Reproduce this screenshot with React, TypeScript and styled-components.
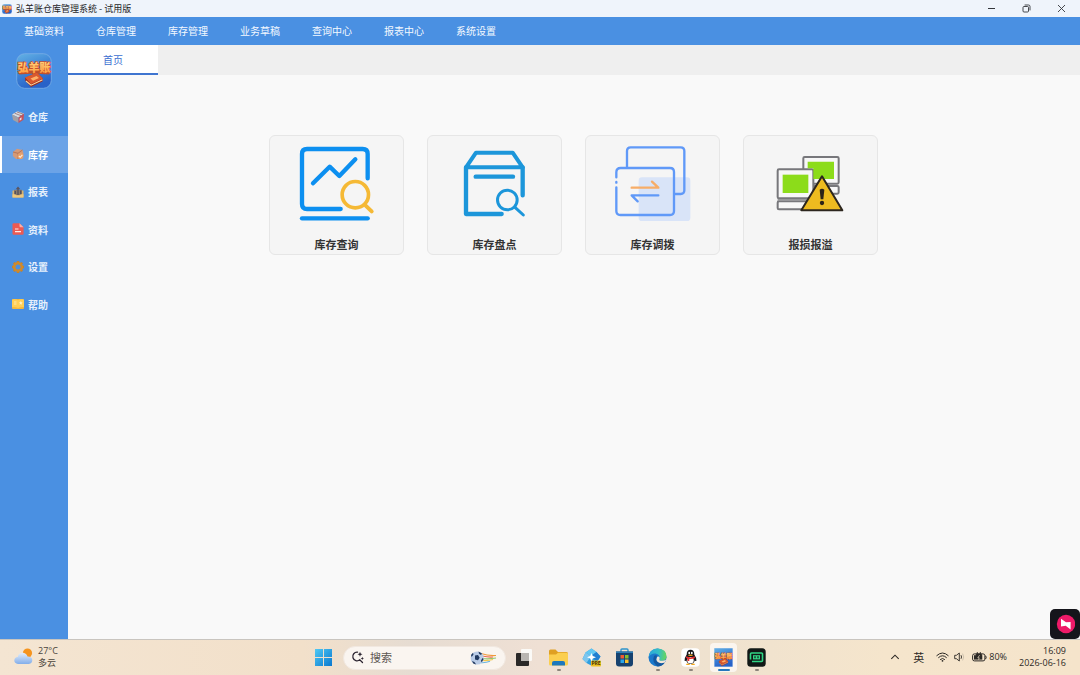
import React from 'react';
import styled, { createGlobalStyle } from 'styled-components';

const GlobalStyle = createGlobalStyle`
  * { box-sizing: border-box; }
  html, body { margin: 0; padding: 0; }
  body, button, input {
    font-family: 'Open Sans', 'Noto Sans CJK SC', sans-serif;
  }
  button { border: 0; padding: 0; margin: 0; background: none; color: inherit; cursor: pointer; }
  svg { display: block; flex: none; }
`;

const Screen = styled.div`
  display: flex;
  flex-direction: column;
  min-height: 100vh;
  background: #f9f9f9;
`;

/* Window title bar */
const TitleBar = styled.header`
  display: flex;
  align-items: center;
  height: 17px;
  padding: 0 2px;
  background: #eff4fb;
`;
const Title = styled.h1`
  flex: 1;
  margin: 0 0 0 4px;
  font-size: 9px;
  line-height: 16px;
  font-weight: 400;
  font-family: 'Noto Sans CJK SC', sans-serif;
  color: #1d1d1f;
`;
const WindowButtons = styled.div`
  display: flex;
  gap: 1px;
`;
const WindowButton = styled.button`
  display: grid;
  place-items: center;
  width: 34px;
  height: 16px;
`;

/* Main menu */
const MenuBar = styled.nav`
  display: flex;
  height: 28px;
  padding: 0 8px;
  background: #4a90e2;
`;
const MenuItem = styled.button`
  padding: 0 16px;
  font-size: 10px;
  line-height: 28px;
  color: #f4f9ff;
`;

/* Body */
const Body = styled.div`
  display: flex;
  flex: 1;
`;
const Sidebar = styled.aside`
  width: 68px;
  flex: none;
  background: #4a90e2;
`;
const LogoBox = styled.div`
  display: flex;
  justify-content: center;
  height: 53px;
  padding-top: 8px;
`;
const SideNav = styled.nav`
  display: flex;
  flex-direction: column;
  height: 225px;
`;
const SideItem = styled.button<{ $active?: boolean }>`
  display: flex;
  flex: 1;
  align-items: center;
  gap: 4px;
  padding-left: 10px;
  border-left: 2px solid ${(p) => (p.$active ? '#ffffff' : 'transparent')};
  background: ${(p) => (p.$active ? '#6ba3e7' : 'transparent')};
  color: ${(p) => (p.$active ? '#ffffff' : '#e6f0fc')};
  font-size: 10px;
  font-weight: 700;
`;
const Workspace = styled.main`
  display: flex;
  flex: 1;
  flex-direction: column;
  min-width: 0;
`;
const TabStrip = styled.div`
  display: flex;
  height: 30px;
  background: #efefef;
`;
const Tab = styled.button`
  width: 90px;
  border-bottom: 2px solid #3f75d0;
  background: #ffffff;
  color: #3c6fd1;
  font-size: 10px;
`;
const CardArea = styled.section`
  display: flex;
  justify-content: center;
  padding: 60px 2px 0 0;
`;
const CardGrid = styled.div`
  display: grid;
  grid-template-columns: repeat(4, 1fr);
  gap: 23px;
  width: 608px;
`;
const Card = styled.button`
  display: flex;
  flex-direction: column;
  align-items: center;
  height: 120px;
  gap: 2px;
  border: 1px solid #e6e6e6;
  border-radius: 6px;
  background: #f5f5f5;
`;
const CardLabel = styled.span`
  font-size: 11px;
  line-height: 16px;
  font-weight: 700;
  color: #333333;
`;

/* Floating recorder button */
const FloatingButton = styled.button`
  position: fixed;
  right: 0;
  bottom: 36px;
  display: grid;
  place-items: center;
  width: 30px;
  height: 30px;
  border-radius: 5px;
  background: #15151b;
`;

/* Taskbar */
const Taskbar = styled.footer`
  display: grid;
  grid-template-columns: 1fr auto 1fr;
  align-items: center;
  height: 36px;
  border-top: 1px solid #c9c5bf;
  background: linear-gradient(90deg, #f4e5d2 0%, #f2e0ca 28%, #e6dcd2 38%, #efe0d4 50%, #efe2cf 66%, #f5e5cc 82%, #f5e4cb 100%);
  color: #2c2925;
`;
const Weather = styled.button`
  display: flex;
  align-items: center;
  justify-self: start;
  gap: 4px;
  padding: 0 0 2px 14px;
  text-align: left;
  font-size: 9px;
  line-height: 12px;
  color: #4b443c;
`;
const Stack = styled.span`
  display: flex;
  flex-direction: column;
`;
const TaskCenter = styled.div`
  display: flex;
  align-items: center;
`;
const TaskApps = styled.div`
  display: flex;
  align-items: center;
  margin-left: 2px;
`;
const SearchBox = styled.label`
  display: flex;
  align-items: center;
  width: 163px;
  height: 24px;
  margin: 0 1px 0 3px;
  padding: 0 7px;
  gap: 6px;
  border: 1px solid #f1e8e0;
  border-radius: 12px;
  background: #faf5f0;
`;
const SearchInput = styled.input`
  flex: 1;
  min-width: 0;
  padding: 0;
  border: 0;
  outline: 0;
  background: none;
  font-size: 11px;
  color: #5c5753;
  &::placeholder { color: #5c5753; opacity: 1; }
`;
const TaskButton = styled.button<{ $state?: 'open' | 'active' }>`
  display: flex;
  flex-direction: column;
  align-items: center;
  width: 33px;
  height: 35px;
  padding-top: 8px;
  gap: 2px;
  &::after {
    content: '';
    width: ${(p) => (p.$state === 'active' ? '12px' : '4px')};
    height: 2px;
    border-radius: 1px;
    background: ${(p) => (p.$state === 'active' ? '#2478bd' : p.$state ? '#8d847b' : 'transparent')};
  }
`;
const ActiveTaskButton = styled(TaskButton)`
  width: 27px;
  height: 29px;
  margin: 0 3px;
  padding-top: 5px;
  border-radius: 4px;
  background: #fbf5ee;
`;
const Tray = styled.div`
  display: flex;
  align-items: center;
  justify-self: end;
  padding: 0 14px 2px 0;
  font-size: 9px;
  line-height: 12px;
`;
const TrayButton = styled.button<{ $gap: number }>`
  display: flex;
  align-items: center;
  gap: 2px;
  margin-right: ${(p) => p.$gap}px;
  font-size: 9px;
`;
const InputMode = styled(TrayButton)`
  font-size: 11px;
`;
const Clock = styled.button`
  font-size: 9px;
  line-height: 12px;
  text-align: right;
`;

function AppLogo({ size, radius = 8 }: { size: number; radius?: number }) {
  const id = `logo${size}`;
  return (
    <svg width={size} height={size} viewBox="0 0 36 36" aria-hidden="true">
      <defs>
        <linearGradient id={`${id}bg`} x1="0" y1="0" x2="0.4" y2="1">
          <stop offset="0" stopColor="#64b2e4" />
          <stop offset="0.5" stopColor="#3f87d8" />
          <stop offset="1" stopColor="#2862c8" />
        </linearGradient>
        <linearGradient id={`${id}tx`} x1="0" y1="0" x2="0" y2="1">
          <stop offset="0" stopColor="#ffe08a" />
          <stop offset="1" stopColor="#ff9a3c" />
        </linearGradient>
      </defs>
      <rect x="0.7" y="0.7" width="34.6" height="34.6" rx={radius} fill={`url(#${id}bg)`} stroke="#7aaee6" strokeWidth="0.8" />
      <path d="M3 20 L9 17 L28 17 L33.5 20 L33 21.5 L18 20.5 L3 21.5 Z" fill="#b9532f" />
      <text x="18" y="18.7" textAnchor="middle" fontSize="11" fontWeight="900" fontFamily="'Noto Sans CJK SC', sans-serif"
        fill={`url(#${id}tx)`} stroke="#c9502a" strokeWidth="1.4" paintOrder="stroke">弘羊账</text>
      <path d="M9 25 L21 19.5 L27 25.5 L26.5 28.5 L15 34 L9.5 28 Z" fill="#9d2b1c" />
      <path d="M9 24.5 L21 19.5 L27 25.5 L15 31 Z" fill="#d9592f" />
      <path d="M10 28 L15 32.2 L26.5 26.8" fill="none" stroke="#ffd79b" strokeWidth="1.1" />
      <path d="M14.5 25.6 L20.5 22.9 L23 25 L17 27.7 Z" fill="#ffb067" />
    </svg>
  );
}

const sideIcons: Record<string, React.ReactNode> = {
  warehouse: (
    <>
      <path d="M0 3.6 L5.5 0.3 L12 2.6 L6.5 6.4 Z" fill="#d9dcdf" />
      <path d="M0 3.6 L6.5 6.4 L6.5 12 L1 9 Z" fill="#a3a0a5" />
      <path d="M6.5 6.4 L12 2.6 L11.5 8.8 L6.5 12 Z" fill="#c75258" />
      <path d="M2.6 2.2 L9 4.7 M5 1 L11 3" stroke="#8b5e62" strokeWidth="0.7" />
      <path d="M7.7 7.5 L9.5 6.3 V8.5 L7.7 9.7 Z" fill="#f2dfdf" />
    </>
  ),
  stock: (
    <>
      <path d="M1 4 L5 0.8 L10.5 2 L11.5 6 L10 11 L4 11 L0.8 8 Z" fill="#d49a79" />
      <path d="M1 4 L6 5.3 L10.5 2 M6 5.3 V11" stroke="#b57252" strokeWidth="0.9" fill="none" />
      <circle cx="8.5" cy="8" r="3" fill="#e8a06a" />
      <path d="M6.9 8 L8.2 9.3 L10.4 6.9" stroke="#fff0dc" strokeWidth="1.1" fill="none" />
    </>
  ),
  report: (
    <>
      <path d="M0.5 4.5 H11.5 V11.5 H0.5 Z" fill="#d9b36c" />
      <path d="M2 3.8 H10 V9 H2 Z" fill="#8b7a68" />
      <path d="M3.3 5 V9 M6 2 V9 M8.7 4.5 V9" stroke="#51505d" strokeWidth="1.3" />
      <path d="M3.7 3.2 L6 0.5 L8.3 3.2 Z" fill="#5c5560" />
      <path d="M0.5 8.3 H3.5 L4.5 9.7 H7.5 L8.5 8.3 H11.5 V11.5 H0.5 Z" fill="#efc77b" />
    </>
  ),
  data: (
    <>
      <path d="M1.7 0.3 H7.5 L11.6 4.3 V10.5 Q11.6 11.7 10.4 11.7 H1.7 Q0.5 11.7 0.5 10.5 V1.5 Q0.5 0.3 1.7 0.3 Z" fill="#ec5a53" />
      <path d="M7.5 0.3 L11.6 4.3 H8.5 Q7.5 4.3 7.5 3.3 Z" fill="#f7b0aa" />
      <path d="M3 6 H6.5 M3 8.7 H9" stroke="#ffeae6" strokeWidth="1.2" />
    </>
  ),
  settings: (
    <>
      <path d="M6 0 V12 M0 6 H12 M1.76 1.76 L10.24 10.24 M10.24 1.76 L1.76 10.24" stroke="#c1832f" strokeWidth="2.4" />
      <circle cx="6" cy="6" r="3.8" fill="#4a90e2" stroke="#d08a2b" strokeWidth="2.6" />
    </>
  ),
  help: (
    <>
      <rect x="0" y="1" width="12" height="10" rx="1" fill="#f4b93f" />
      <path d="M0 1.7 Q3.5 0.7 6 2.2 Q8.5 0.7 12 1.7 V9 Q8.5 8.5 6 10 Q3.5 8.5 0 9 Z" fill="#ffcf55" />
      <path d="M2 4 H4.5 M2 6 H4.5" stroke="#fff0b8" strokeWidth="0.9" />
      <path d="M8.8 3 L9.4 4.3 L10.7 4.4 L9.7 5.3 L10 6.7 L8.8 6 L7.6 6.7 L7.9 5.3 L6.9 4.4 L8.2 4.3 Z" fill="#fff3c8" />
    </>
  ),
};

const sideItems = [
  { icon: 'warehouse', label: '仓库' },
  { icon: 'stock', label: '库存', active: true },
  { icon: 'report', label: '报表' },
  { icon: 'data', label: '资料' },
  { icon: 'settings', label: '设置' },
  { icon: 'help', label: '帮助' },
];

const menuItems = ['基础资料', '仓库管理', '库存管理', '业务草稿', '查询中心', '报表中心', '系统设置'];

const cards = [
  {
    label: '库存查询',
    viewBox: '30 34 399 297',
    art: (
      <g fill="none" strokeLinecap="round" strokeLinejoin="round" strokeWidth="13">
        <g stroke="#0c8ff0">
          <path d="M323 161 V88 Q323 73 308 73 H141 Q126 73 126 88 V238 Q126 253 141 253 H242" />
          <path d="M126 281 H323" />
          <path d="M159 176 L209 126 L238 154 L286 104" />
        </g>
        <g stroke="#f5b935">
          <circle cx="286" cy="210" r="39.5" strokeWidth="11" />
          <path d="M317 243 L335 260" strokeWidth="12" />
        </g>
      </g>
    ),
  },
  {
    label: '库存盘点',
    viewBox: '30 34 399 297',
    art: (
      <g fill="none" stroke="#1c96da" strokeLinecap="round" strokeLinejoin="round" strokeWidth="13">
        <path d="M144 128 L174 84 H284 L314 128 Z" strokeWidth="12" />
        <path d="M314 128 V212 M144 128 V268 H251" />
        <path d="M173 156 H285" />
        <circle cx="268" cy="226" r="29.5" strokeWidth="9" />
        <path d="M291 248 L316 271" strokeWidth="9" />
      </g>
    ),
  },
  {
    label: '库存调拨',
    viewBox: '30 34 399 297',
    art: (
      <g fill="none" strokeLinecap="round" strokeLinejoin="round" strokeWidth="7">
        <rect x="188" y="158" width="155" height="131" rx="10" fill="#d9e4f8" />
        <g stroke="#6099f8">
          <path d="M153 126 V79 Q153 68 164 68 H314 Q325 68 325 79 V197 Q325 208 314 208 H298" />
          <path d="M121 158 V143 Q121 130 134 130 H282 Q294 130 294 142 V259 Q294 271 282 271 H133 Q121 271 121 259 V188" />
          <path d="M121 172 V174" />
          <path d="M247 212 H167 L185 230" />
        </g>
        <path d="M167 189 H247 L228 171" stroke="#f7ad68" />
      </g>
    ),
  },
  {
    label: '报损报溢',
    viewBox: '33 34 399 297',
    art: (
      <g strokeLinejoin="round">
        <g fill="#f7f7f7" stroke="#77777b" strokeWidth="6">
          <rect x="211" y="97" width="106" height="80" rx="4" />
          <rect x="232" y="184" width="85" height="23" rx="4" />
          <rect x="134" y="134" width="107" height="87" rx="4" />
          <rect x="134" y="230" width="107" height="24" rx="4" />
        </g>
        <path d="M224 111 H303 V163 H241 V131 H224 Z" fill="#8cdc1a" />
        <rect x="149" y="150" width="77" height="55" fill="#8cdc1a" />
        <path d="M134 226 H222" stroke="#97979a" strokeWidth="6" />
        <path d="M267 155 L328 257 H205 Z" fill="#edbb20" stroke="#2c261e" strokeWidth="6" />
        <path d="M260 195 Q267 189 274 195 L271 224 H263 Z" fill="#2b2318" />
        <circle cx="267" cy="235" r="6.5" fill="#2b2318" />
      </g>
    ),
  },
];

const taskIcons = {
  start: (
    <svg width="19" height="19" viewBox="0 0 19 19">
      <defs>
        <linearGradient id="win" x1="0" y1="0" x2="1" y2="1">
          <stop offset="0" stopColor="#4fc9f4" />
          <stop offset="1" stopColor="#0a78cf" />
        </linearGradient>
      </defs>
      <path d="M1 1 H9 V9 H1 Z M10 1 H18 V9 H10 Z M1 10 H9 V18 H1 Z M10 10 H18 V18 H10 Z" fill="url(#win)" />
    </svg>
  ),
  taskView: (
    <svg width="19" height="19" viewBox="0 0 19 19">
      <rect x="7" y="1" width="11" height="12" rx="1" fill="#fbfaf7" />
      <rect x="2" y="5" width="13" height="13" rx="1" fill="#2a2827" />
      <path d="M7 5 H15 V13 H7 Z" fill="#b9b6b2" />
    </svg>
  ),
  explorer: (
    <svg width="19" height="19" viewBox="0 0 19 19">
      <path d="M0 3 Q0 1.5 1.5 1.5 H6.5 L9 4 H17.5 Q19 4 19 5.5 V8 H0 Z" fill="#dfa022" />
      <path d="M0 6.5 H7 L9 4.8 H17.8 Q19 4.8 19 6 V16 Q19 17.5 17.5 17.5 H1.5 Q0 17.5 0 16 Z" fill="#fbcf4f" />
      <path d="M3 17.5 V15 Q3 13 5 13 H14 Q16 13 16 15 V17.5 Z" fill="#1c78bd" />
    </svg>
  ),
  copilot: (
    <svg width="19" height="19" viewBox="0 0 19 19">
      <path d="M9.5 0.5 L14.5 4 L18.5 8.5 L15 14 L10 18 L4.5 15 L0.5 11 L3.5 4.5 Z" fill="#2f9fe0" />
      <path d="M9.5 0.5 L14.5 4 L9 8 L3.5 4.5 Z" fill="#62c7f2" />
      <path d="M0.5 11 L3.5 4.5 L9 8 L4.5 15 Z" fill="#7cc6ee" />
      <path d="M14.5 4 L18.5 8.5 L15 14 L9 8 Z" fill="#227fd0" />
      <path d="M9.5 5 L10.8 8 L14 9.3 L10.8 10.6 L9.5 13.7 L8.2 10.6 L5 9.3 L8.2 8 Z" fill="#ffffff" />
      <rect x="9" y="12.5" width="10" height="6" rx="1" fill="#efc120" />
      <text x="14" y="17.4" textAnchor="middle" fontSize="5" fontWeight="700" fontFamily="'Open Sans', sans-serif" fill="#41340b">PRE</text>
    </svg>
  ),
  store: (
    <svg width="19" height="19" viewBox="0 0 19 19">
      <path d="M6 4 V2 Q6 1 7 1 H12 Q13 1 13 2 V4" fill="none" stroke="#2e94cc" strokeWidth="1.4" />
      <path d="M1 3.5 H18 V15.5 Q18 18.5 15 18.5 H4 Q1 18.5 1 15.5 Z" fill="#17426f" />
      <path d="M1 3.5 H18 V5 H1 Z" fill="#2d7db5" />
      <path d="M5.5 7 H9 V10.5 H5.5 Z" fill="#ef5a32" />
      <path d="M10 7 H13.5 V10.5 H10 Z" fill="#88bd2b" />
      <path d="M5.5 11.5 H9 V15 H5.5 Z" fill="#2aa6e8" />
      <path d="M10 11.5 H13.5 V15 H10 Z" fill="#fbc12d" />
    </svg>
  ),
  edge: (
    <svg width="19" height="19" viewBox="0 0 19 19">
      <defs>
        <linearGradient id="edgeTop" x1="0" y1="0.4" x2="1" y2="0.5">
          <stop offset="0" stopColor="#2aa6dc" />
          <stop offset="0.55" stopColor="#34bfc4" />
          <stop offset="1" stopColor="#68d65a" />
        </linearGradient>
      </defs>
      <circle cx="9.5" cy="9.5" r="9" fill="#1b78cb" />
      <path d="M0.6 9 Q1.5 0.5 9.7 0.5 Q18.5 1 18.5 8.5 Q18 12.8 13.5 12.8 Q10.5 12.6 11.6 10.7 Q12.4 6.4 7.5 5.5 Q2.8 5.3 0.6 9 Z" fill="url(#edgeTop)" />
      <path d="M11.6 10.7 Q10.5 12.6 13.5 12.8 Q16.2 12.9 18.3 11.5 L16.6 15 Q12.5 17 9.2 14.2 Q7.4 11.6 9.2 8.8 Q12.2 8 11.6 10.7 Z" fill="#f2e7da" />
      <path d="M6 8 Q3.5 14 9.7 18.5 Q14.2 18.3 16.8 14.5 Q12.2 16.3 9.2 13.6 Q7 11 9.2 7.8 Q7.5 6.7 6 8 Z" fill="#15589f" />
    </svg>
  ),
  qq: (
    <svg width="19" height="19" viewBox="0 0 19 19">
      <rect x="0.3" y="0.3" width="18.4" height="18.4" rx="4" fill="#ffffff" />
      <path d="M9.5 1.8 Q13.4 2 13.3 6.5 Q15.7 10 15.4 12.8 Q14.8 13.5 13.8 12.2 Q12.8 16 9.5 16 Q6.2 16 5.2 12.2 Q4.2 13.5 3.6 12.8 Q3.3 10 5.7 6.5 Q5.6 2 9.5 1.8 Z" fill="#16181c" />
      <ellipse cx="9.5" cy="12.2" rx="3.2" ry="3.2" fill="#ffffff" />
      <ellipse cx="8.2" cy="5" rx="0.9" ry="1.2" fill="#ffffff" />
      <ellipse cx="10.8" cy="5" rx="0.9" ry="1.2" fill="#ffffff" />
      <ellipse cx="9.5" cy="7.2" rx="2.4" ry="0.8" fill="#f4a91e" />
      <path d="M5.3 8.3 Q9.5 10.6 13.7 8.3 L14 9.9 Q11.5 11.3 8.3 10.9 V13 H6.5 V10.5 L5 9.9 Z" fill="#e42a2c" />
      <path d="M4.8 16.2 Q6.5 14.5 9.2 16.5 Q6.5 17.8 4.8 16.2 Z M14.2 16.2 Q12.5 14.5 9.8 16.5 Q12.5 17.8 14.2 16.2 Z" fill="#f4a91e" />
    </svg>
  ),
  recorder: (
    <svg width="19" height="19" viewBox="0 0 19 19">
      <rect x="0.3" y="0.3" width="18.4" height="18.4" rx="3.5" fill="#111816" />
      <path d="M3.5 11.5 V6 Q3.5 5 4.5 5 H14.5 Q15.5 5 15.5 6 V12.5 Q15.5 13.5 14.5 13.5 H5" fill="none" stroke="#31d685" strokeWidth="1.6" />
      <rect x="6" y="7.2" width="7" height="4.2" fill="#31d685" />
      <path d="M8 8.3 V10.3 M11 8.3 V10.3" stroke="#111816" strokeWidth="1.2" />
    </svg>
  ),
};

export default function App() {
  return (
    <>
      <GlobalStyle />
      <Screen>
        <TitleBar>
          <AppLogo size={10} />
          <Title>弘羊账仓库管理系统 - 试用版</Title>
          <WindowButtons>
            <WindowButton aria-label="最小化">
              <svg width="9" height="9" viewBox="0 0 9 9"><path d="M1 4.5 H8" stroke="#33363a" /></svg>
            </WindowButton>
            <WindowButton aria-label="还原">
              <svg width="9" height="9" viewBox="0 0 9 9" fill="none" stroke="#33363a" strokeWidth="0.9">
                <rect x="1" y="2.5" width="5.5" height="5.5" rx="1" />
                <path d="M2.6 1 H6.5 Q8 1 8 2.5 V6.4" />
              </svg>
            </WindowButton>
            <WindowButton aria-label="关闭">
              <svg width="9" height="9" viewBox="0 0 9 9"><path d="M1 1 L8 8 M8 1 L1 8" stroke="#33363a" strokeWidth="0.9" /></svg>
            </WindowButton>
          </WindowButtons>
        </TitleBar>

        <MenuBar>
          {menuItems.map((m) => <MenuItem key={m}>{m}</MenuItem>)}
        </MenuBar>

        <Body>
          <Sidebar>
            <LogoBox><AppLogo size={36} /></LogoBox>
            <SideNav>
              {sideItems.map((s) => (
                <SideItem key={s.label} $active={s.active}>
                  <svg width="12" height="12" viewBox="0 0 12 12" fill="none" aria-hidden="true">{sideIcons[s.icon]}</svg>
                  {s.label}
                </SideItem>
              ))}
            </SideNav>
          </Sidebar>
          <Workspace>
            <TabStrip><Tab>首页</Tab></TabStrip>
            <CardArea>
              <CardGrid>
                {cards.map((c) => (
                  <Card key={c.label}>
                    <svg width="133" height="99" viewBox={c.viewBox} aria-hidden="true">{c.art}</svg>
                    <CardLabel>{c.label}</CardLabel>
                  </Card>
                ))}
              </CardGrid>
            </CardArea>
          </Workspace>
        </Body>

        <FloatingButton aria-label="录制">
          <svg width="20" height="20" viewBox="0 0 20 20">
            <circle cx="11" cy="10" r="9.2" fill="#ee1a68" />
            <path d="M6 4.7 L11 8.3 L15.6 8 V15.4 L10.7 11.8 L6 12.6 Z" fill="#ffffff" />
          </svg>
        </FloatingButton>

        <Taskbar>
          <Weather>
            <svg width="20" height="20" viewBox="0 0 20 20">
              <defs>
                <linearGradient id="cloud" x1="0" y1="0" x2="0" y2="1">
                  <stop offset="0" stopColor="#e3edfb" />
                  <stop offset="1" stopColor="#82aeea" />
                </linearGradient>
              </defs>
              <circle cx="13.5" cy="6" r="4.6" fill="#f5941f" />
              <path d="M4 17 Q0.3 16.6 0.3 13.3 Q0.6 10.3 3.7 10 Q5 5.5 9.3 5.8 Q12.5 6.3 13.5 9.5 Q18 9.3 18.3 13 Q18.3 16.6 14.8 17 Z" fill="url(#cloud)" />
            </svg>
            <Stack><span>27°C</span><span>多云</span></Stack>
          </Weather>

          <TaskCenter>
            <TaskButton aria-label="开始">{taskIcons.start}</TaskButton>
            <SearchBox>
              <svg width="13" height="13" viewBox="0 0 13 13" fill="none" stroke="#2b2430" strokeWidth="1.3" strokeLinecap="round">
                <path d="M6.5 1.2 A4.3 4.3 0 1 0 8.8 8.8 L11.5 11.5" />
                <path d="M9 0.8 L9.7 2.6 L11.5 3.3 L9.7 4 L9 5.8 L8.3 4 L6.5 3.3 L8.3 2.6 Z" fill="#2b2430" stroke="none" />
                <path d="M11.3 5.7 L11.8 6.9 L13 7.4 L11.8 7.9 L11.3 9 L10.8 7.9 L9.6 7.4 L10.8 6.9 Z" fill="#2b2430" stroke="none" />
              </svg>
              <SearchInput type="search" placeholder="搜索" aria-label="搜索" />
              <svg width="28" height="16" viewBox="0 0 28 16">
                <g fill="none" strokeWidth="1.2">
                  <path d="M11 3.5 Q18 6 26 5.5" stroke="#f09a3a" />
                  <path d="M12 6 Q19 7.5 23 7" stroke="#ea6a4b" />
                  <path d="M12 8.5 Q19 9.3 26 8" stroke="#8fc46a" />
                  <path d="M12 10.5 Q18 11 23 9.5" stroke="#f2c64b" />
                  <path d="M11 12.7 Q16 13 20 11.3" stroke="#6cb5de" />
                </g>
                <circle cx="7.2" cy="8" r="6.6" fill="#b9cbe6" />
                <path d="M5 5.5 L8 5 L9.7 7.7 L8 10.3 L5 9.6 Z M1 5 L3 2.7 L3.5 4.5 L1.6 7 Z M8.5 1.5 L12 3.5 L11 5 L9 3.7 Z M12.5 8 L13.7 9 L11.5 12.5 L11 10.5 Z M2 11 L4.4 12 L6.2 14.5 L3.3 13.5 Z" fill="#21395f" />
              </svg>
            </SearchBox>
            <TaskButton aria-label="任务视图">{taskIcons.taskView}</TaskButton>
            <TaskApps>
              <TaskButton aria-label="文件资源管理器" $state="open">{taskIcons.explorer}</TaskButton>
              <TaskButton aria-label="Copilot">{taskIcons.copilot}</TaskButton>
              <TaskButton aria-label="应用商店">{taskIcons.store}</TaskButton>
              <TaskButton aria-label="Edge" $state="open">{taskIcons.edge}</TaskButton>
              <TaskButton aria-label="QQ" $state="open">{taskIcons.qq}</TaskButton>
              <ActiveTaskButton aria-label="弘羊账" $state="active"><AppLogo size={19} radius={1} /></ActiveTaskButton>
              <TaskButton aria-label="录屏" $state="open">{taskIcons.recorder}</TaskButton>
            </TaskApps>
          </TaskCenter>

          <Tray>
            <TrayButton $gap={13} aria-label="显示隐藏的图标">
              <svg width="10" height="8" viewBox="0 0 10 8"><path d="M1.3 5.8 L5 2.2 L8.7 5.8" fill="none" stroke="#2c2925" strokeWidth="1.1" /></svg>
            </TrayButton>
            <InputMode $gap={12}>英</InputMode>
            <TrayButton $gap={4} aria-label="网络">
              <svg width="13" height="12" viewBox="0 0 13 12" fill="none" stroke="#2c2925" strokeLinecap="round">
                <path d="M0.8 4.6 Q6.5 -0.8 12.2 4.6 M2.6 6.5 Q6.5 2.8 10.4 6.5 M4.4 8.4 Q6.5 6.4 8.6 8.4" strokeWidth="1" />
                <circle cx="6.5" cy="9.8" r="0.9" fill="#2c2925" stroke="none" />
              </svg>
            </TrayButton>
            <TrayButton $gap={7} aria-label="音量">
              <svg width="12" height="12" viewBox="0 0 12 12" fill="none" stroke="#2c2925" strokeWidth="0.9" strokeLinejoin="round">
                <path d="M1.7 4.3 H3.4 L6.3 2 V10 L3.4 7.7 H1.7 Z" />
                <path d="M8 4.2 Q9.1 6 8 7.8" />
                <path d="M9.6 2.6 Q11.8 6 9.6 9.4" stroke="#c9bda9" />
              </svg>
            </TrayButton>
            <TrayButton $gap={12}>
              <svg width="15" height="12" viewBox="0 0 15 12">
                <rect x="0.6" y="2.9" width="12.3" height="7" rx="1.8" fill="none" stroke="#2c2925" />
                <path d="M2 4.2 H10.3 V8.6 H2 Z" fill="#2c2925" />
                <path d="M13.6 4.7 Q14.8 6.4 13.6 8" stroke="#2c2925" fill="none" />
                <path d="M5.3 1 V3 M8.3 1 V3 M4.3 3 H9.3 V5 Q9.3 6.6 6.8 6.6 Q4.3 6.6 4.3 5 Z" fill="#2c2925" stroke="#2c2925" strokeWidth="0.9" />
                <path d="M7.6 4.2 L5.8 6.8 H7.2 L6.6 8.8" stroke="#f5e4cb" strokeWidth="0.7" fill="none" />
              </svg>
              80%
            </TrayButton>
            <Clock><Stack><span>16:09</span><span>2026-06-16</span></Stack></Clock>
          </Tray>
        </Taskbar>
      </Screen>
    </>
  );
}
